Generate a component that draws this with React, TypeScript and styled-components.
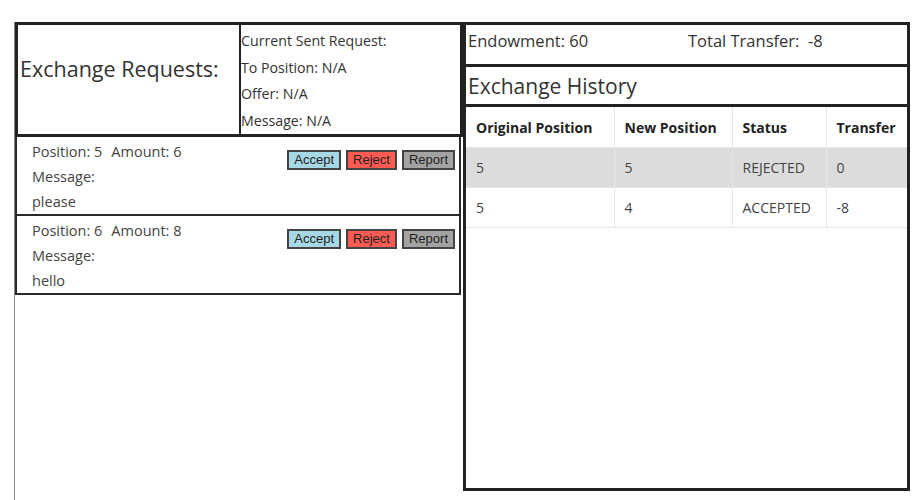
import { createGlobalStyle } from 'styled-components';
import styled from 'styled-components';

interface ExchangeRequest {
  position: number;
  amount: number;
  message: string;
}

interface HistoryRow {
  original: number;
  next: number;
  status: string;
  transfer: number;
}

const GlobalStyle = createGlobalStyle`
  body {
    margin: 0;
    background: #fff;
    font-family: 'Open Sans', 'Noto Sans', sans-serif;
    color: #333;
  }
`;

const Page = styled.div`
  display: flex;
  align-items: flex-start;
  padding: 22px 0 0 14px;
  min-height: 500px;
  box-sizing: border-box;
`;

const LeftPanel = styled.div`
  width: 449px;
  min-height: 478px;
  border-left: 1px solid #8a8a8a;
  box-sizing: border-box;
`;

const RequestHeader = styled.div`
  display: grid;
  grid-template-columns: 223px 1fr;
  height: 115px;
  border: 3px solid #222;
  box-sizing: border-box;
`;

const HeaderTitle = styled.div`
  display: flex;
  align-items: center;
  padding: 0 0 22px 2px;
  font-size: 21.5px;
  white-space: nowrap;
  border-right: 2px solid #222;
`;

const SentInfo = styled.div`
  display: flex;
  flex-direction: column;
  padding-top: 3px;
  font-size: 14.2px;
  line-height: 26.5px;
  white-space: nowrap;
`;

const RequestItem = styled.div`
  display: flex;
  justify-content: space-between;
  height: 79px;
  padding: 2px 4px 0 15px;
  border: 2px solid #2a2a2a;
  border-top: none;
  margin-right: 2px;
  box-sizing: border-box;
  font-size: 14.5px;
  line-height: 25px;
  color: #444;
`;

const Spaced = styled.span`
  margin-left: 9px;
`;

const ButtonRow = styled.div`
  display: flex;
  gap: 5px;
  padding-top: 11px;
`;

const ActionButton = styled.button<{ $bg: string }>`
  height: 20px;
  padding: 0 5px;
  font-family: 'Liberation Sans', Arial, sans-serif;
  font-size: 13px;
  line-height: 14px;
  color: #222;
  background: ${({ $bg }) => $bg};
  border: 2px solid #444;
  border-radius: 0;
`;

const RightPanel = styled.div`
  width: 447px;
  height: 469px;
  border: 3px solid #222;
  box-sizing: border-box;
  display: flex;
  flex-direction: column;
`;

const StatsRow = styled.div`
  display: grid;
  grid-template-columns: 220px 1fr;
  height: 42px;
  padding: 0 2px 8px;
  align-items: center;
  font-size: 16.5px;
  border-bottom: 3px solid #222;
  box-sizing: border-box;
  color: #333;
`;

const HistoryTitle = styled.div`
  height: 40px;
  padding: 0 2px;
  display: flex;
  align-items: center;
  font-size: 21px;
  border-bottom: 3px solid #222;
  box-sizing: border-box;
`;

const Table = styled.table`
  width: 100%;
  table-layout: fixed;
  border-collapse: collapse;
  font-size: 14px;
`;

const Th = styled.th<{ $w: number }>`
  width: ${({ $w }) => $w}px;
  height: 40px;
  padding: 2px 10px 0;
  box-sizing: border-box;
  text-align: left;
  font-weight: 700;
  white-space: nowrap;
  color: #222;
  border: 1px solid #e6e6e6;
  border-top: none;
  &:first-child { border-left: none; }
  &:last-child { border-right: none; }
`;

const Tr = styled.tr<{ $shade: boolean }>`
  background: ${({ $shade }) => ($shade ? '#dcdcdc' : '#fff')};
`;

const Td = styled.td`
  height: 39px;
  padding: 0 10px;
  color: #444;
  border: 1px solid #e6e6e6;
  &:first-child { border-left: none; }
  &:last-child { border-right: none; }
`;

const requests: ExchangeRequest[] = [
  { position: 5, amount: 6, message: 'please' },
  { position: 6, amount: 8, message: 'hello' },
];

const history: HistoryRow[] = [
  { original: 5, next: 5, status: 'REJECTED', transfer: 0 },
  { original: 5, next: 4, status: 'ACCEPTED', transfer: -8 },
];

function App() {
  return (
    <Page>
      <GlobalStyle />
      <LeftPanel>
        <RequestHeader>
          <HeaderTitle>Exchange Requests:</HeaderTitle>
          <SentInfo>
            <div>Current Sent Request:</div>
            <div>To Position: N/A</div>
            <div>Offer: N/A</div>
            <div>Message: N/A</div>
          </SentInfo>
        </RequestHeader>
        {requests.map((req) => (
          <RequestItem key={req.position}>
            <div>
              <div>
                Position: {req.position}
                <Spaced>Amount: {req.amount}</Spaced>
              </div>
              <div>Message:</div>
              <div>{req.message}</div>
            </div>
            <ButtonRow>
              <ActionButton $bg="#a6d8e6">Accept</ActionButton>
              <ActionButton $bg="#ff5b52">Reject</ActionButton>
              <ActionButton $bg="#a3a3a3">Report</ActionButton>
            </ButtonRow>
          </RequestItem>
        ))}
      </LeftPanel>
      <RightPanel>
        <StatsRow>
          <span>Endowment: 60</span>
          <span>Total Transfer:&nbsp; -8</span>
        </StatsRow>
        <HistoryTitle>Exchange History</HistoryTitle>
        <Table>
          <thead>
            <tr>
              <Th $w={148}>Original Position</Th>
              <Th $w={118}>New Position</Th>
              <Th $w={94}>Status</Th>
              <Th $w={81}>Transfer</Th>
            </tr>
          </thead>
          <tbody>
            {history.map((row, i) => (
              <Tr key={i} $shade={i % 2 === 0}>
                <Td>{row.original}</Td>
                <Td>{row.next}</Td>
                <Td>{row.status}</Td>
                <Td>{row.transfer}</Td>
              </Tr>
            ))}
          </tbody>
        </Table>
      </RightPanel>
    </Page>
  );
}

export default App;
